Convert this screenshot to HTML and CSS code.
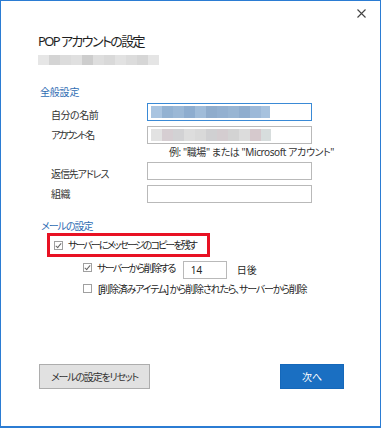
FILE: index.html
```html
<!DOCTYPE html>
<html lang="ja">
<head>
<meta charset="UTF-8">
<meta name="viewport" content="width=device-width, initial-scale=1.0">
<title>POP アカウントの設定</title>
<link rel="stylesheet" href="styles.css">
</head>
<body>
  <div class="window">
    <div class="titlebar">
      <button class="close" type="button" aria-label="閉じる">
        <svg width="9" height="9" viewBox="0 0 9 9"><path d="M0.5 0.5 L8.5 8.5 M8.5 0.5 L0.5 8.5" stroke="#444" stroke-width="1.1" fill="none"/></svg>
      </button>
    </div>
    <div class="content">
      <h1 class="title">POP アカウントの設定</h1>
      <div class="mosaic mosaic-grey"></div>

      <h2 class="section">全般設定</h2>
      <div class="form">
        <label class="form-label">自分の名前</label>
        <div class="field focused"><div class="mosaic mosaic-blue"></div></div>

        <label class="form-label kana">アカウント名</label>
        <div class="field"><div class="mosaic mosaic-pink"></div></div>

        <div class="hint">例: "職場" または "Microsoft アカウント"</div>

        <label class="form-label mixed">返信先アドレス</label>
        <div class="field"></div>

        <label class="form-label">組織</label>
        <div class="field"></div>
      </div>

      <h2 class="section section-mail">メールの設定</h2>
      <div class="highlight">
        <div class="check-row">
          <span class="checkbox checked"></span>
          <span>サーバーにメッセージのコピーを残す</span>
        </div>
      </div>
      <div class="check-row sub">
        <span class="checkbox checked"></span>
        <span class="sub-text">サーバーから削除する</span>
        <span class="days">14</span>
        <span class="days-label">日後</span>
      </div>
      <div class="check-row sub sub-last">
        <span class="checkbox"></span>
        <span>[削除済みアイテム] から削除されたら、サーバーから削除</span>
      </div>

      <div class="buttons">
        <button class="btn btn-reset" type="button">メールの設定をリセット</button>
        <button class="btn btn-next" type="button">次へ</button>
      </div>
    </div>
  </div>
</body>
</html>
```

FILE: styles.css
```css
body {
  margin: 0;
  font-family: "Noto Sans", "Noto Sans CJK JP", sans-serif;
  font-size: 10px;
  letter-spacing: -1.4px;
  font-feature-settings: "palt";
  color: #262626;
  background: #fff;
}
.window {
  width: 381px;
  height: 428px;
  box-sizing: border-box;
  border: 1px solid #2b7cd3;
  border-bottom-width: 2px;
  overflow: hidden;
}
.titlebar {
  display: flex;
  justify-content: flex-end;
  height: 22px;
}
.close {
  border: none;
  background: none;
  padding: 0;
  margin: 8px 14px 0 0;
  width: 9px;
  height: 9px;
  display: block;
}
.close svg { display: block; }
.content {
  padding-left: 37px;
}
.title {
  font-size: 13px;
  font-weight: normal;
  letter-spacing: -1.6px;
  color: #1e1e1e;
  margin: 9px 0 0 0;
  line-height: 18px;
}
.mosaic {
  height: 10px;
}
.mosaic-grey {
  width: 121px;
  margin-top: 5px;
  background: linear-gradient(to right,
    #e6e6e6 0 11px, #d4d4d4 11px 22px, #dcdcdc 22px 33px, #e0e0e0 33px 44px,
    #cdcdcd 44px 55px, #dedede 55px 66px, #d9d9d9 66px 77px, #e2e2e2 77px 88px,
    #dcdcdc 88px 99px, #d6d6d6 99px 110px, #e5e5e5 110px 121px);
}
.section {
  font-size: 10px;
  font-weight: normal;
  color: #2f6db3;
  letter-spacing: -0.2px;
  margin: 20px 0 0 2px;
  line-height: 14px;
}
.form {
  display: grid;
  grid-template-columns: 96px 165px;
  margin: 4px 0 0 13px;
  align-items: center;
}
.form-label {
  line-height: 18px;
  letter-spacing: -0.5px;
  color: #333;
}
.form-label.kana { letter-spacing: -2px; }
.form-label.mixed { letter-spacing: -1.1px; }
.field {
  height: 18px;
  box-sizing: border-box;
  border: 1px solid #b9b9b9;
  margin-bottom: 5px;
  padding: 2px 0 0 3px;
  background: #fff;
}
.field.focused {
  border-color: #3a8ad6;
}
.form > .field:nth-of-type(2) { margin-bottom: 0; }
.form > .field:last-child { margin-bottom: 0; }
.mosaic-blue {
  width: 119px;
  height: 12px;
  background: linear-gradient(to right,
    #a9c4e0 0 11px, #93b2d2 11px 22px, #9bb8d6 22px 33px, #8eadcf 33px 44px,
    #a0bcd9 44px 55px, #8faccc 55px 66px, #93b0d0 66px 77px, #98b5d3 77px 88px,
    #8fadce 88px 99px, #9db9d8 99px 110px, #a7c2de 110px 119px);
}
.mosaic-pink {
  width: 120px;
  height: 12px;
  background: linear-gradient(to right,
    #e2e2e2 0 11px, #d6ced2 11px 22px, #d2d2d4 22px 33px, #dddddd 33px 44px,
    #d9d9d9 44px 55px, #d0d0d2 55px 66px, #d4cdd0 66px 77px, #d3d3d3 77px 88px,
    #dcdcdc 88px 99px, #d6c9cd 99px 110px, #d7dddd 110px 120px);
}
.hint {
  grid-column: 1 / 3;
  margin: 2px 0 4px 118px;
  line-height: 12px;
  letter-spacing: -0.4px;
  white-space: nowrap;
  color: #333;
}
.section-mail {
  margin-top: 16px;
  margin-left: 3px;
  letter-spacing: -1px;
}
.highlight {
  width: 163px;
  height: 24px;
  box-sizing: border-box;
  border: 3px solid #e81123;
  margin: 0 0 0 9px;
  padding-left: 4px;
  display: flex;
  align-items: center;
  letter-spacing: -1.9px;
}
.check-row {
  display: flex;
  align-items: center;
  white-space: nowrap;
  line-height: 14px;
}
.checkbox {
  width: 9px;
  height: 9px;
  box-sizing: border-box;
  border: 1px solid #a0a0a0;
  margin-right: 5px;
  flex: none;
  position: relative;
}
.checkbox.checked::after {
  content: "";
  position: absolute;
  left: 2px;
  top: 0;
  width: 2px;
  height: 5px;
  border: solid #666;
  border-width: 0 1px 1px 0;
  transform: rotate(40deg);
}
.sub {
  margin: 4px 0 0 45px;
  align-items: flex-start;
}
.sub .checkbox { margin-top: 2px; }
.sub-text { letter-spacing: -1.7px; }
.sub-last {
  margin-top: 3px;
  letter-spacing: -1.2px;
}
.sub-last .checkbox { margin-right: 6px; }
.days {
  width: 44px;
  height: 18px;
  box-sizing: border-box;
  border: 1px solid #b9b9b9;
  margin-left: 8px;
  padding-left: 7px;
  line-height: 16px;
  letter-spacing: 0;
}
.days-label {
  margin-left: 10px;
  margin-top: 2px;
  letter-spacing: 0;
}
.buttons {
  display: flex;
  justify-content: space-between;
  width: 305px;
  margin: 68px 0 0 1px;
}
.btn {
  height: 25px;
  font-family: "Noto Sans CJK JP", sans-serif;
  font-size: 10px;
  letter-spacing: -1.2px;
  font-feature-settings: "palt";
  padding: 0;
}
.btn-reset {
  width: 111px;
  background: #e1e1e1;
  border: 1px solid #adadad;
  color: #333;
}
.btn-next {
  width: 64px;
  background: #1a6fc2;
  border: 1px solid #1568ba;
  color: #fff;
  letter-spacing: 0;
}
```
